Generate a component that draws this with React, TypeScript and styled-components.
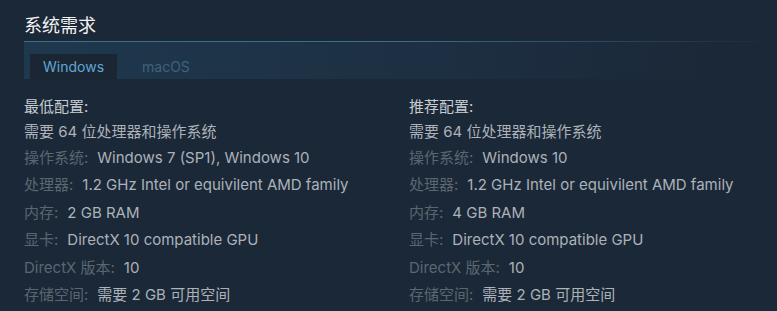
import styled, { createGlobalStyle } from "styled-components";

const GlobalStyle = createGlobalStyle`
  html, body {
    margin: 0;
    padding: 0;
    background: #1b2838;
  }
  body {
    font-family: Inter, "Noto Sans CJK SC", sans-serif;
  }
`;

const Section = styled.div`
  width: 777px;
  height: 311px;
  box-sizing: border-box;
  padding: 12px 0 0 24px;
  background: #1b2838;
  overflow: hidden;
`;

const Title = styled.h2`
  margin: 0;
  font-size: 18px;
  font-weight: normal;
  color: #f2f2f2;
  line-height: 28px;
  padding-bottom: 1px;
  border-bottom: 1px solid transparent;
  border-image: linear-gradient(to right, #3a6e8c 0%, #3a6e8c 50%, rgba(58, 110, 140, 0.2) 90%, transparent 100%) 1;
`;

const TabBar = styled.div`
  display: flex;
  align-items: flex-end;
  height: 37px;
  padding-left: 6px;
  background: linear-gradient(to right, rgba(33, 70, 95, 0.55) 0%, rgba(33, 60, 85, 0.35) 55%, rgba(27, 40, 56, 0) 92%);
`;

const Tab = styled.div<{ $active?: boolean }>`
  height: 25px;
  line-height: 25px;
  padding: 0 13px;
  font-size: 14px;
  color: ${(p) => (p.$active ? "#5fa8d6" : "#3f6379")};
  background: ${(p) => (p.$active ? "#1a2634" : "transparent")};
  margin-right: ${(p) => (p.$active ? "12px" : "0")};
`;

const Columns = styled.div`
  display: grid;
  grid-template-columns: 385px 1fr;
  padding-top: 18px;
`;

const Col = styled.ul`
  list-style: none;
  margin: 0;
  padding: 0;
  font-size: 15px;
`;

const Heading = styled.li`
  color: #c6ccd2;
  line-height: 20px;
  height: 20px;
  margin-bottom: 5px;
`;

const Row = styled.li`
  color: #acb2b8;
  line-height: 20px;
  height: 20px;
  margin-bottom: 7.4px;
  white-space: nowrap;
`;

const Bits = styled.li`
  color: #acb2b8;
  line-height: 20px;
  height: 20px;
  margin-bottom: 6px;
`;

const Label = styled.span`
  color: #5b6670;
  margin-right: 9px;
`;

type Spec = { label: string; value: string };

const minSpecs: Spec[] = [
  { label: "操作系统:", value: "Windows 7 (SP1), Windows 10" },
  { label: "处理器:", value: "1.2 GHz Intel or equivilent AMD family" },
  { label: "内存:", value: "2 GB RAM" },
  { label: "显卡:", value: "DirectX 10 compatible GPU" },
  { label: "DirectX 版本:", value: "10" },
  { label: "存储空间:", value: "需要 2 GB 可用空间" },
];

const recSpecs: Spec[] = [
  { label: "操作系统:", value: "Windows 10" },
  { label: "处理器:", value: "1.2 GHz Intel or equivilent AMD family" },
  { label: "内存:", value: "4 GB RAM" },
  { label: "显卡:", value: "DirectX 10 compatible GPU" },
  { label: "DirectX 版本:", value: "10" },
  { label: "存储空间:", value: "需要 2 GB 可用空间" },
];

const SpecList = ({ title, specs }: { title: string; specs: Spec[] }) => (
  <Col>
    <Heading>{title}</Heading>
    <Bits>需要 64 位处理器和操作系统</Bits>
    {specs.map((s) => (
      <Row key={s.label}>
        <Label>{s.label}</Label>
        {s.value}
      </Row>
    ))}
  </Col>
);

export default function App() {
  return (
    <>
      <GlobalStyle />
      <Section>
        <Title>系统需求</Title>
        <TabBar>
          <Tab $active>Windows</Tab>
          <Tab>macOS</Tab>
        </TabBar>
        <Columns>
          <SpecList title="最低配置:" specs={minSpecs} />
          <SpecList title="推荐配置:" specs={recSpecs} />
        </Columns>
      </Section>
    </>
  );
}
